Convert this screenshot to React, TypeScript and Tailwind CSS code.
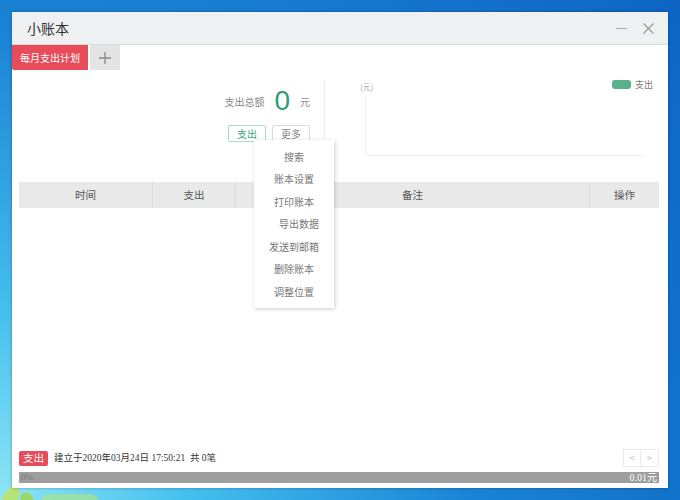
import React from 'react'

const CN = { fontFamily: '"Noto Sans CJK SC", "Liberation Sans", sans-serif' }
const MIX = { fontFamily: '"Liberation Serif", "Noto Sans CJK SC", serif' }

const MENU = ['搜索', '账本设置', '打印账本', '导出数据', '发送到邮箱', '删除账本', '调整位置']

export default function App() {
  return (
    <div
      className="relative h-[500px] w-[680px] overflow-hidden bg-[radial-gradient(circle_at_0%_100%,#8fe6f6_0%,#45c0ee_22%,#1a84d6_55%,#0d64c2_100%)] pt-[12px] pl-[12px]"
      style={CN}
    >
      {/* desktop leaves */}
      <div className="absolute bottom-[-8px] left-[4px] h-[22px] w-[14px] rotate-[35deg] rounded-full bg-[#b6e37a]" />
      <div className="absolute bottom-[-10px] left-[22px] h-[18px] w-[12px] rotate-[-30deg] rounded-full bg-[#9bd86a]" />
      <div className="absolute bottom-[-14px] left-[40px] h-[20px] w-[60px] rounded-full bg-[#a8e28a] opacity-70" />

      <div className="relative flex h-[476px] w-[656px] flex-col bg-white shadow-[0_0_3px_rgba(0,0,0,0.3)]">
        {/* title bar */}
        <div className="flex h-[33px] items-center justify-between border-b border-[#dcdcdc] bg-[#eff0f2] pr-[14px] pl-[15px]">
          <span className="text-[14px] text-[#333]">小账本</span>
          <div className="flex items-center gap-[16px]">
            <span className="block h-[1px] w-[11px] bg-[#aaa]" />
            <svg width="11" height="11" viewBox="0 0 11 11" stroke="#999" strokeWidth="1.2">
              <path d="M0.5 0.5 L10.5 10.5 M10.5 0.5 L0.5 10.5" />
            </svg>
          </div>
        </div>

        {/* tabs */}
        <div className="flex h-[25px] items-stretch gap-[2px]">
          <div className="flex w-[76px] items-center justify-center rounded-bl-[2px] bg-[#e84b5a] text-[10px] text-white">
            每月支出计划
          </div>
          <div className="flex w-[30px] items-center justify-center bg-[#e4e4e4]">
            <svg width="12" height="12" viewBox="0 0 12 12" stroke="#888" strokeWidth="1.3">
              <path d="M6 0 V12 M0 6 H12" />
            </svg>
          </div>
        </div>

        {/* summary + chart */}
        <div className="flex h-[112px]">
          <div className="mt-[10px] mb-[20px] flex w-[313px] flex-col items-end border-r border-[#f0f0f0] pt-[6px] pr-[14px]">
            <div className="flex items-center">
              <span className="text-[10px] text-[#888]">支出总额</span>
              <span
                className="mr-[10px] ml-[10px] text-[28px] leading-[30px] text-[#2e9e72]"
                style={{ fontFamily: '"Liberation Sans", sans-serif', fontWeight: 300 }}
              >
                0
              </span>
              <span className="text-[10px] text-[#888]">元</span>
            </div>
            <div className="mt-[9px] flex gap-[6px]">
              <div className="flex h-[17px] w-[38px] items-center justify-center rounded-[2px] border border-[#a8dcc6] text-[10px] text-[#3aa57a]">
                支出
              </div>
              <div className="flex h-[17px] w-[38px] items-center justify-center rounded-[2px] border border-[#dcdcdc] text-[10px] text-[#888]">
                更多
              </div>
            </div>
          </div>
          <div className="relative flex-1">
            <span className="absolute top-[11px] left-[35px] text-[8px] text-[#aaa]">(元)</span>
            <div className="absolute top-[8px] right-[15px] flex items-center gap-[4px]">
              <span className="block h-[9px] w-[19px] rounded-[3px] bg-[#5aaf8c]" />
              <span className="text-[9px] text-[#777]">支出</span>
            </div>
            <div className="mt-[25px] mr-[24px] ml-[40px] h-[61px] border-b border-l border-[#f0f0f0]" />
          </div>
        </div>

        {/* table header */}
        <div className="mr-[9px] ml-[7px] flex h-[26px] items-center bg-[#e9e9e9] text-[10.5px] text-[#555]">
          <div className="flex h-full w-[134px] items-center justify-center border-r border-[#dedede]">时间</div>
          <div className="flex h-full w-[83px] items-center justify-center border-r border-[#dedede]">支出</div>
          <div className="flex h-full flex-1 items-center justify-center border-r border-[#dedede]">备注</div>
          <div className="flex h-full w-[69px] items-center justify-center">操作</div>
        </div>

        <div className="flex-1" />

        {/* footer */}
        <div className="mr-[9px] ml-[7px] flex h-[20px] items-center">
          <span className="flex h-[15px] w-[29px] items-center justify-center rounded-[2px] bg-[#e84b5a] text-[10.5px] text-white">
            支出
          </span>
          <span className="ml-[6px] text-[9.5px] text-[#333]" style={MIX}>
            建立于2020年03月24日 17:50:21&nbsp;&nbsp;共 0笔
          </span>
          <div className="ml-auto flex h-[18px] border border-[#eaeaea] text-[9px] text-[#bbb]">
            <span className="flex w-[17px] items-center justify-center border-r border-[#eaeaea]">&lt;</span>
            <span className="flex w-[17px] items-center justify-center">&gt;</span>
          </div>
        </div>
        <div
          className="mt-[4px] mr-[9px] mb-[5px] ml-[7px] flex h-[11px] items-center justify-between bg-[#9e9e9e] px-[2px] text-[9px] leading-none"
          style={MIX}
        >
          <span className="text-[#777]">0%</span>
          <span className="text-[10px] text-white">0.01元</span>
        </div>

        {/* dropdown */}
        <div className="absolute top-[128px] left-[242px] flex w-[80px] flex-col items-center bg-white py-[5px] text-[10px] text-[#777] shadow-[1px_1px_4px_rgba(0,0,0,0.2)]">
          {MENU.map((m, i) => (
            <div key={m} className={`flex h-[22.5px] items-center ${i === 3 ? 'pl-[10px]' : ''}`}>
              {m}
            </div>
          ))}
        </div>
      </div>
    </div>
  )
}
